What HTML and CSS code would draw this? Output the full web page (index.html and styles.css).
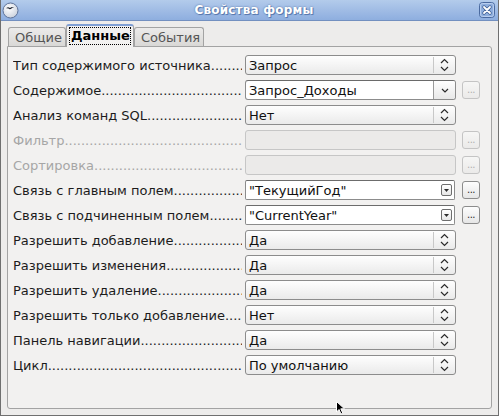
FILE: index.html
```html
<!DOCTYPE html>
<html lang="ru">
<head>
<meta charset="utf-8">
<title>Свойства формы</title>
<link rel="stylesheet" href="styles.css">
</head>
<body>
<div class="window">
  <div class="titlebar">
    <svg class="app-icon" width="17" height="17" viewBox="0 0 17 17">
      <defs>
        <radialGradient id="g1" cx="0.4" cy="0.35" r="0.7">
          <stop offset="0" stop-color="#ffffff"/>
          <stop offset="1" stop-color="#c9d0dc"/>
        </radialGradient>
      </defs>
      <circle cx="8.5" cy="8.5" r="7.5" fill="url(#g1)" stroke="#5e7399" stroke-width="1"/>
      <path d="M4 6.2 C5.5 5 7 5.2 8 6 C9 5 10.5 4.6 12 5.2 C10.6 5.4 9.6 6 9 7 L7.6 7.2 C6.8 6.4 5.6 6 4 6.2 Z" fill="#1f2430"/>
    </svg>
    <div class="title">Свойства формы</div>
    <div class="close">
      <svg width="16" height="16" viewBox="0 0 16 16">
        <rect x="0.5" y="0.5" width="15" height="15" rx="3" fill="#8eaedd" stroke="#4a6aa0"/>
        <rect x="1.5" y="1.5" width="13" height="13" rx="2" fill="none" stroke="#b8cdee"/>
        <path d="M5 5 L11 11 M11 5 L5 11" stroke="#3f5f95" stroke-width="3.4" stroke-linecap="round"/>
        <path d="M5 5 L11 11 M11 5 L5 11" stroke="#ffffff" stroke-width="1.8" stroke-linecap="round"/>
      </svg>
    </div>
  </div>

  <div class="body">
    <div class="tabs">
      <div class="tab">Общие</div>
      <div class="tab active"><span class="focus">Данные</span></div>
      <div class="tab">События</div>
    </div>

    <div class="panel">
      <div class="row">
        <div class="label">Тип содержимого источника</div>
        <div class="listbox"><span class="value">Запрос</span><span class="spin"><svg width="9" height="14" viewBox="0 0 9 14"><path d="M1 5 L4.5 1.5 L8 5 M1 9 L4.5 12.5 L8 9" fill="none" stroke="#2b2b2b" stroke-width="1.2"/></svg></span></div>
      </div>

      <div class="row">
        <div class="label">Содержимое</div>
        <div class="combo"><span class="entry">Запрос_Доходы</span><span class="dropbtn"><svg width="8" height="5" viewBox="0 0 8 5"><path d="M1 1 L4 4 L7 1" fill="none" stroke="#2b2b2b" stroke-width="1.2"/></svg></span></div>
        <div class="more disabled">...</div>
      </div>

      <div class="row">
        <div class="label">Анализ команд SQL</div>
        <div class="listbox"><span class="value">Нет</span><span class="spin"><svg width="9" height="14" viewBox="0 0 9 14"><path d="M1 5 L4.5 1.5 L8 5 M1 9 L4.5 12.5 L8 9" fill="none" stroke="#2b2b2b" stroke-width="1.2"/></svg></span></div>
      </div>

      <div class="row">
        <div class="label disabled">Фильтр</div>
        <div class="field disabled"></div>
        <div class="more disabled">...</div>
      </div>

      <div class="row">
        <div class="label disabled">Сортировка</div>
        <div class="field disabled"></div>
        <div class="more disabled">...</div>
      </div>

      <div class="row">
        <div class="label">Связь с главным полем</div>
        <div class="link"><span class="entry">"ТекущийГод"</span><span class="minibtn"><svg width="5" height="3" viewBox="0 0 5 3"><path d="M0 0 H5 L2.5 3 Z" fill="#2b2b2b"/></svg></span></div>
        <div class="more">...</div>
      </div>

      <div class="row">
        <div class="label">Связь с подчиненным полем</div>
        <div class="link"><span class="entry">"CurrentYear"</span><span class="minibtn"><svg width="5" height="3" viewBox="0 0 5 3"><path d="M0 0 H5 L2.5 3 Z" fill="#2b2b2b"/></svg></span></div>
        <div class="more">...</div>
      </div>

      <div class="row">
        <div class="label">Разрешить добавление</div>
        <div class="listbox"><span class="value">Да</span><span class="spin"><svg width="9" height="14" viewBox="0 0 9 14"><path d="M1 5 L4.5 1.5 L8 5 M1 9 L4.5 12.5 L8 9" fill="none" stroke="#2b2b2b" stroke-width="1.2"/></svg></span></div>
      </div>

      <div class="row">
        <div class="label">Разрешить изменения</div>
        <div class="listbox"><span class="value">Да</span><span class="spin"><svg width="9" height="14" viewBox="0 0 9 14"><path d="M1 5 L4.5 1.5 L8 5 M1 9 L4.5 12.5 L8 9" fill="none" stroke="#2b2b2b" stroke-width="1.2"/></svg></span></div>
      </div>

      <div class="row">
        <div class="label">Разрешить удаление</div>
        <div class="listbox"><span class="value">Да</span><span class="spin"><svg width="9" height="14" viewBox="0 0 9 14"><path d="M1 5 L4.5 1.5 L8 5 M1 9 L4.5 12.5 L8 9" fill="none" stroke="#2b2b2b" stroke-width="1.2"/></svg></span></div>
      </div>

      <div class="row">
        <div class="label">Разрешить только добавление</div>
        <div class="listbox"><span class="value">Нет</span><span class="spin"><svg width="9" height="14" viewBox="0 0 9 14"><path d="M1 5 L4.5 1.5 L8 5 M1 9 L4.5 12.5 L8 9" fill="none" stroke="#2b2b2b" stroke-width="1.2"/></svg></span></div>
      </div>

      <div class="row">
        <div class="label">Панель навигации</div>
        <div class="listbox"><span class="value">Да</span><span class="spin"><svg width="9" height="14" viewBox="0 0 9 14"><path d="M1 5 L4.5 1.5 L8 5 M1 9 L4.5 12.5 L8 9" fill="none" stroke="#2b2b2b" stroke-width="1.2"/></svg></span></div>
      </div>

      <div class="row">
        <div class="label">Цикл</div>
        <div class="listbox"><span class="value">По умолчанию</span><span class="spin"><svg width="9" height="14" viewBox="0 0 9 14"><path d="M1 5 L4.5 1.5 L8 5 M1 9 L4.5 12.5 L8 9" fill="none" stroke="#2b2b2b" stroke-width="1.2"/></svg></span></div>
      </div>
    </div>
  </div>

  <svg class="cursor" width="10" height="14" viewBox="0 0 10 14">
    <path d="M0.5 0.5 L0.5 11 L3 8.5 L5 13 L6.8 12.2 L4.8 7.8 L8.5 7.8 Z" fill="#000" stroke="#fff" stroke-width="1"/>
  </svg>
</div>
</body>
</html>
```

FILE: styles.css
```css
* { box-sizing: border-box; }

html, body {
  margin: 0;
  padding: 0;
  background: #edeceb;
}

body {
  font-family: "DejaVu Sans", "Liberation Sans", sans-serif;
  font-size: 13px;
  color: #1c1c1c;
}

.window {
  position: relative;
  width: 499px;
  height: 416px;
  display: flex;
  flex-direction: column;
  background: #edeceb;
  border: 1px solid #6f6f6f;
  border-top: none;
  overflow: hidden;
}

.titlebar {
  height: 21px;
  display: flex;
  align-items: center;
  padding: 0 3px 0 1px;
  background: linear-gradient(#b3cbeb, #8eaedf);
  border-bottom: 1px solid #7390c0;
}

.app-icon { flex: none; display: block; margin-top: 1px; }

.title {
  flex: 1;
  text-align: center;
  color: #ffffff;
  font-weight: bold;
  font-size: 12px;
  letter-spacing: 0.2px;
  text-shadow: 0 0 2px #4d6a9c, 1px 1px 0 #5f7fb5;
  padding-left: 10px;
}

.close { flex: none; width: 16px; height: 16px; }
.close svg { display: block; }

.body {
  flex: 1;
  display: flex;
  flex-direction: column;
  padding: 3px 6px 6px 6px;
}

.tabs {
  display: flex;
  align-items: flex-end;
  height: 22px;
  padding-left: 1px;
  position: relative;
  z-index: 1;
}

.tab {
  height: 19px;
  padding: 0 6px;
  display: flex;
  align-items: center;
  color: #555555;
  background: linear-gradient(#ecebea, #d9d8d6);
  border: 1px solid #a3a3a3;
  border-bottom: none;
  border-radius: 3px 3px 0 0;
}

.tab:first-child { padding: 0 6px 0 6px; width: 58px; }
.tab:last-child { width: 70px; }

.tab.active {
  height: 23px;
  margin-bottom: -1px;
  width: 68px;
  padding: 0 2px;
  color: #000;
  font-weight: bold;
  background: #f2f1f0;
  border-color: #a3a3a3;
  border-top: 2px solid #7f9fd4;
  align-items: flex-start;
  padding-top: 1px;
}

.focus {
  display: block;
  width: 100%;
  border: 1px dotted #000;
  padding: 0 1px;
  line-height: 16px;
  text-align: center;
}

.panel {
  flex: 1;
  background: #f2f1f0;
  border: 1px solid #a3a3a3;
  border-radius: 0 3px 3px 3px;
  padding: 8px 5px 0 5px;
  display: flex;
  flex-direction: column;
  gap: 5px;
}

.row {
  display: flex;
  align-items: center;
  height: 20px;
}

.label {
  flex: none;
  width: 229px;
  margin-right: 3px;
  white-space: nowrap;
  overflow: hidden;
}

.label::after {
  content: "........................................................................................";
}

.label.disabled { color: #a6a6a6; }

.listbox, .combo, .field, .link {
  flex: none;
  width: 211px;
  height: 20px;
  border-radius: 3px;
  display: flex;
  align-items: center;
}

.listbox {
  border: 1px solid #8c8c8c;
  background: linear-gradient(#fefefe, #eaeaea);
}

.value {
  flex: 1;
  padding-left: 3px;
  white-space: nowrap;
  color: #101010;
}

.spin {
  flex: none;
  width: 22px;
  height: 16px;
  border-left: 1px solid #c8c8c8;
  display: flex;
  align-items: center;
  justify-content: center;
}

.spin svg { display: block; }

.combo {
  border: 1px solid #8c8c8c;
  border-top-color: #6a6a6a;
  background: #ffffff;
  overflow: hidden;
}

.entry {
  flex: 1;
  padding-left: 3px;
  white-space: nowrap;
  color: #101010;
}

.combo .dropbtn {
  flex: none;
  width: 22px;
  height: 100%;
  background: linear-gradient(#fefefe, #e8e8e8);
  border-left: 1px solid #9a9a9a;
  display: flex;
  align-items: center;
  justify-content: center;
}

.dropbtn svg { display: block; }

.field.disabled {
  border: 1px solid #c6c6c6;
  background: #ebeae9;
}

.link {
  width: 210px;
  border: 1px solid #8c8c8c;
  border-top-color: #6c6c6c;
  background: #ffffff;
  padding-right: 2px;
  border-radius: 2px;
}

.minibtn {
  flex: none;
  width: 11px;
  height: 12px;
  border: 1px solid #6e6e6e;
  border-radius: 2px;
  background: linear-gradient(#ffffff, #e6e6e6);
  display: flex;
  align-items: center;
  justify-content: center;
}

.minibtn svg { display: block; }

.more {
  flex: none;
  width: 18px;
  height: 18px;
  margin-left: 6px;
  border: 1px solid #8c8c8c;
  border-radius: 3px;
  background: linear-gradient(#fdfdfd, #e6e6e6);
  font-size: 10px;
  line-height: 16px;
  text-align: center;
  color: #2a2a2a;
  letter-spacing: -0.5px;
}

.link + .more { margin-left: 7px; }

.more.disabled {
  border-color: #c4c4c4;
  color: #b0b0b0;
  background: linear-gradient(#f6f6f5, #ebeae9);
}

.cursor {
  position: absolute;
  left: 335px;
  top: 401px;
  display: block;
}
```
